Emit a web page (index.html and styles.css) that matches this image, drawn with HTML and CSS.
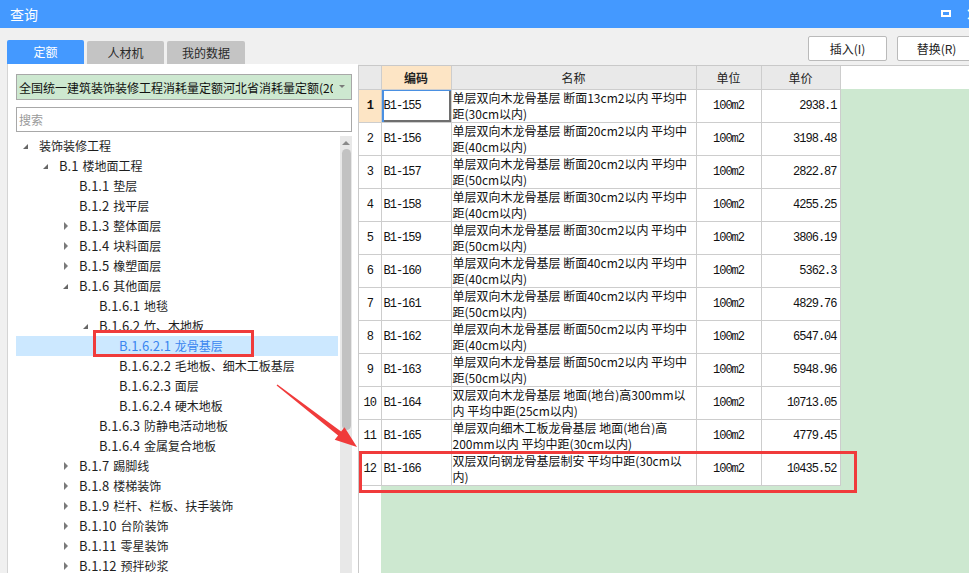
FILE: index.html
```html
<!DOCTYPE html>
<html lang="zh-CN">
<head>
<meta charset="utf-8">
<title>查询</title>
<link rel="stylesheet" href="styles.css">
</head>
<body>
<div class="window">
  <div class="titlebar">
    <span class="title">查询</span>
    <span class="tb-max"></span>
    <span class="tb-close">×</span>
  </div>
  <div class="main">
    <div class="left">
      <div class="tabs">
        <div class="tab active">定额</div>
        <div class="tab">人材机</div>
        <div class="tab wide">我的数据</div>
      </div>
      <div class="panel">
        <div class="select">
          <span class="select-text">全国统一建筑装饰装修工程消耗量定额河北省消耗量定额(2012)</span>
          <span class="caret"></span>
        </div>
        <div class="search">搜索</div>
        <div class="tree-area">
          <ul class="tree">
            <li class="node l0"><span class="tg exp"></span>装饰装修工程</li>
            <li class="node l1"><span class="tg exp"></span><span class="no">B.1</span>楼地面工程</li>
            <li class="node l2"><span class="tg"></span><span class="no">B.1.1</span>垫层</li>
            <li class="node l2"><span class="tg"></span><span class="no">B.1.2</span>找平层</li>
            <li class="node l2"><span class="tg col"></span><span class="no">B.1.3</span>整体面层</li>
            <li class="node l2"><span class="tg col"></span><span class="no">B.1.4</span>块料面层</li>
            <li class="node l2"><span class="tg col"></span><span class="no">B.1.5</span>橡塑面层</li>
            <li class="node l2"><span class="tg exp"></span><span class="no">B.1.6</span>其他面层</li>
            <li class="node l3"><span class="tg"></span><span class="no">B.1.6.1</span>地毯</li>
            <li class="node l3"><span class="tg exp"></span><span class="no">B.1.6.2</span>竹、木地板</li>
            <li class="node l4 selected"><span class="tg"></span><span class="no">B.1.6.2.1</span>龙骨基层</li>
            <li class="node l4"><span class="tg"></span><span class="no">B.1.6.2.2</span>毛地板、细木工板基层</li>
            <li class="node l4"><span class="tg"></span><span class="no">B.1.6.2.3</span>面层</li>
            <li class="node l4"><span class="tg"></span><span class="no">B.1.6.2.4</span>硬木地板</li>
            <li class="node l3"><span class="tg"></span><span class="no">B.1.6.3</span>防静电活动地板</li>
            <li class="node l3"><span class="tg"></span><span class="no">B.1.6.4</span>金属复合地板</li>
            <li class="node l2"><span class="tg col"></span><span class="no">B.1.7</span>踢脚线</li>
            <li class="node l2"><span class="tg col"></span><span class="no">B.1.8</span>楼梯装饰</li>
            <li class="node l2"><span class="tg col"></span><span class="no">B.1.9</span>栏杆、栏板、扶手装饰</li>
            <li class="node l2"><span class="tg col"></span><span class="no">B.1.10</span>台阶装饰</li>
            <li class="node l2"><span class="tg col"></span><span class="no">B.1.11</span>零星装饰</li>
            <li class="node l2"><span class="tg col"></span><span class="no">B.1.12</span>预拌砂浆</li>
          </ul>
          <div class="scrollbar">
            <div class="sb-up"></div>
            <div class="sb-thumb"></div>
          </div>
        </div>
      </div>
    </div>
    <div class="right">
      <div class="toolbar">
        <button class="btn">插入(I)</button>
        <button class="btn">替换(R)</button>
      </div>
      <div class="grid">
        <table class="data">
          <colgroup>
            <col class="c-rn"><col class="c-code"><col class="c-name"><col class="c-unit"><col class="c-price">
          </colgroup>
          <thead>
            <tr>
              <th class="rn"></th>
              <th class="code-h">编码</th>
              <th>名称</th>
              <th>单位</th>
              <th>单价</th>
            </tr>
          </thead>
          <tbody>
            <tr><td class="rn cur">1</td><td class="code sel">B1-155</td><td class="name">单层双向木龙骨基层 断面13cm2以内 平均中<br>距(30cm以内)</td><td class="unit">100m2</td><td class="price">2938.1</td></tr>
            <tr><td class="rn">2</td><td class="code">B1-156</td><td class="name">单层双向木龙骨基层 断面20cm2以内 平均中<br>距(40cm以内)</td><td class="unit">100m2</td><td class="price">3198.48</td></tr>
            <tr><td class="rn">3</td><td class="code">B1-157</td><td class="name">单层双向木龙骨基层 断面20cm2以内 平均中<br>距(50cm以内)</td><td class="unit">100m2</td><td class="price">2822.87</td></tr>
            <tr><td class="rn">4</td><td class="code">B1-158</td><td class="name">单层双向木龙骨基层 断面30cm2以内 平均中<br>距(40cm以内)</td><td class="unit">100m2</td><td class="price">4255.25</td></tr>
            <tr><td class="rn">5</td><td class="code">B1-159</td><td class="name">单层双向木龙骨基层 断面30cm2以内 平均中<br>距(50cm以内)</td><td class="unit">100m2</td><td class="price">3806.19</td></tr>
            <tr><td class="rn">6</td><td class="code">B1-160</td><td class="name">单层双向木龙骨基层 断面40cm2以内 平均中<br>距(40cm以内)</td><td class="unit">100m2</td><td class="price">5362.3</td></tr>
            <tr><td class="rn">7</td><td class="code">B1-161</td><td class="name">单层双向木龙骨基层 断面40cm2以内 平均中<br>距(50cm以内)</td><td class="unit">100m2</td><td class="price">4829.76</td></tr>
            <tr><td class="rn">8</td><td class="code">B1-162</td><td class="name">单层双向木龙骨基层 断面50cm2以内 平均中<br>距(40cm以内)</td><td class="unit">100m2</td><td class="price">6547.04</td></tr>
            <tr><td class="rn">9</td><td class="code">B1-163</td><td class="name">单层双向木龙骨基层 断面50cm2以内 平均中<br>距(50cm以内)</td><td class="unit">100m2</td><td class="price">5948.96</td></tr>
            <tr><td class="rn">10</td><td class="code">B1-164</td><td class="name">双层双向木龙骨基层 地面(地台)高300mm以<br>内 平均中距(25cm以内)</td><td class="unit">100m2</td><td class="price">10713.05</td></tr>
            <tr><td class="rn">11</td><td class="code">B1-165</td><td class="name">单层双向细木工板龙骨基层 地面(地台)高<br>200mm以内 平均中距(30cm以内)</td><td class="unit">100m2</td><td class="price">4779.45</td></tr>
            <tr><td class="rn">12</td><td class="code">B1-166</td><td class="name">双层双向钢龙骨基层制安 平均中距(30cm以<br>内)</td><td class="unit">100m2</td><td class="price">10435.52</td></tr>
          </tbody>
        </table>
      </div>
    </div>
  </div>
  <svg class="annot" width="969" height="573" viewBox="0 0 969 573">
    <rect x="94.5" y="331.5" width="158" height="24" fill="none" stroke="#f03b3b" stroke-width="3"/>
    <rect x="360.5" y="452.5" width="495" height="39" fill="none" stroke="#f03b3b" stroke-width="3"/>
    <polygon fill="#f03b3b" points="276.6,385.5 338.1,435.6 334.7,439.8 357,447 344.5,427.2 341.1,431.5 277.4,384.5"/>
  </svg>
</div>
</body>
</html>
```
FILE: styles.css
```css
* { box-sizing: border-box; }
html, body { margin: 0; padding: 0; }
body {
  width: 969px;
  height: 573px;
  overflow: hidden;
  background: #f0f0f0;
  font-family: "Noto Sans CJK SC", "Noto Sans", sans-serif;
  color: #1e1e1e;
}
.window {
  position: relative;
  width: 969px;
  height: 573px;
  display: flex;
  flex-direction: column;
  overflow: hidden;
}

/* title bar */
.titlebar {
  height: 28px;
  flex: 0 0 28px;
  background: #4499ff;
  display: flex;
  align-items: center;
  padding-left: 10px;
  color: #fff;
}
.title { font-size: 14px; line-height: 28px; flex: 1; }
.tb-max {
  width: 10px;
  height: 7px;
  border: 2px solid #fff;
  margin-right: 14px;
  margin-top: -2px;
}
.tb-close {
  font-size: 18px;
  line-height: 28px;
  margin-right: -8px;
  width: 12px;
  font-family: "DejaVu Sans", sans-serif;
}

/* layout */
.main {
  flex: 1;
  display: flex;
  min-height: 0;
}
.left {
  width: 358px;
  flex: 0 0 358px;
  padding-left: 7px;
  display: flex;
  flex-direction: column;
}
.tabs {
  margin-top: 12px;
  height: 24px;
  display: flex;
  align-items: flex-end;
  gap: 3px;
}
.tab {
  width: 77px;
  height: 23px;
  background: #c4c4c4;
  border-radius: 2px 2px 0 0;
  font-size: 12px;
  line-height: 23px;
  text-align: center;
  color: #2a2a2a;
}
.tab.wide { width: 78px; }
.tab.active {
  height: 24px;
  line-height: 24px;
  background: #4499ff;
  color: #fff;
}
.panel {
  flex: 1;
  min-height: 0;
  background: #fff;
  border-left: 1px solid #d4d4d4;
  padding: 10px 6px 0 8px;
  display: flex;
  flex-direction: column;
}
.select {
  height: 26px;
  flex: 0 0 26px;
  border: 1px solid #a8a8a8;
  background: #cde8d0;
  display: flex;
  align-items: center;
  padding-left: 2px;
  font-size: 12px;
  color: #111;
}
.select-text {
  flex: 1;
  overflow: hidden;
  white-space: nowrap;
}
.caret {
  width: 18px;
  flex: 0 0 18px;
  height: 10px;
  position: relative;
}
.caret::after {
  content: "";
  position: absolute;
  left: 6px;
  top: 3px;
  border-left: 3px solid transparent;
  border-right: 3px solid transparent;
  border-top: 3px solid #7a7a7a;
}
.search {
  margin-top: 7px;
  height: 25px;
  flex: 0 0 25px;
  border: 1px solid #a8a8a8;
  padding-left: 2px;
  font-size: 12px;
  line-height: 23px;
  color: #9a9a9a;
}
.tree-area {
  margin-top: 4px;
  flex: 1;
  min-height: 0;
  display: flex;
  overflow: hidden;
}
.tree {
  flex: 1;
  list-style: none;
  margin: 0;
  padding: 0;
}
.node {
  height: 20px;
  line-height: 20px;
  display: flex;
  align-items: center;
  font-size: 12px;
  color: #1e1e1e;
  white-space: nowrap;
}
.node .no {
  font-size: 13px;
  margin-right: 4px;
}
.l0 { padding-left: 3px; }
.l1 { padding-left: 23px; }
.l2 { padding-left: 43px; }
.l3 { padding-left: 63px; }
.l4 { padding-left: 83px; }
.tg {
  width: 20px;
  flex: 0 0 20px;
  height: 20px;
  position: relative;
}
.tg.exp::after {
  content: "";
  position: absolute;
  left: 4px;
  top: 8px;
  border-left: 5px solid transparent;
  border-bottom: 5px solid #666;
}
.tg.col::after {
  content: "";
  position: absolute;
  left: 5px;
  top: 6px;
  border-top: 4px solid transparent;
  border-bottom: 4px solid transparent;
  border-left: 4px solid #7a7a7a;
}
.node.selected {
  background: #cce8ff;
  color: #3a86ef;
  margin-right: 2px;
}
.scrollbar {
  width: 12px;
  flex: 0 0 12px;
  background: #e8e8e8;
  display: flex;
  flex-direction: column;
  align-items: center;
}
.sb-up {
  margin-top: 5px;
  width: 0;
  height: 0;
  border-left: 4px solid transparent;
  border-right: 4px solid transparent;
  border-bottom: 4px solid #8a8a8a;
}
.sb-thumb {
  margin-top: 4px;
  width: 9px;
  height: 281px;
  background: #c2c2c2;
  border-radius: 5px;
}

/* right side */
.right {
  flex: 1;
  min-width: 0;
  display: flex;
  flex-direction: column;
  overflow: hidden;
}
.toolbar {
  height: 37px;
  flex: 0 0 37px;
  padding-top: 8px;
  padding-left: 450px;
  display: flex;
  gap: 10px;
}
.btn {
  width: 79px;
  flex: 0 0 79px;
  height: 25px;
  background: #fff;
  border: 1px solid #bababa;
  border-radius: 2px;
  font-family: "Noto Sans CJK SC", "Noto Sans", sans-serif;
  font-size: 12px;
  color: #222;
  padding: 0;
}
.grid {
  flex: 1;
  min-height: 0;
  border-top: 1px solid #c9c9c9;
  border-left: 1px solid #c9c9c9;
  background:
    linear-gradient(#fff, #fff) top left / 100% 23px no-repeat,
    linear-gradient(to right, #fff 22px, #cde8d0 22px);
}
.data {
  border-collapse: collapse;
  table-layout: fixed;
  width: 481px;
  background: #fff;
}
.c-rn { width: 22px; }
.c-code { width: 70px; }
.c-name { width: 245px; }
.c-unit { width: 65px; }
.c-price { width: 79px; }
.data th, .data td {
  border: 1px solid #cdcdcd;
  padding: 0 2px;
  white-space: nowrap;
  overflow: hidden;
}
.data tr > :first-child { border-left: none; }
.data thead th { border-top: none; }
.data thead tr { height: 23px; }
.data tbody tr { height: 33px; }
.data th {
  background: #e9e9e9;
  font-size: 12px;
  font-weight: normal;
  color: #222;
  text-align: center;
}
.data th.code-h {
  background: #fde5c5;
  font-weight: bold;
}
.data td {
  font-size: 12px;
  vertical-align: middle;
  color: #111;
}
.data td.rn, .data td.code, .data td.unit, .data td.price {
  font-family: "Liberation Mono", "DejaVu Sans Mono", monospace;
  font-size: 12px;
  letter-spacing: -1px;
}
.data td.rn { text-align: center; padding: 0; }
.data td.rn.cur { background: #fde5c5; font-weight: bold; }
.data td.code.sel {
  box-shadow: inset 2px 1px 0 #4a90e2, inset -2px -2px 0 #6e6e6e;
}
.data td.name { line-height: 16px; padding: 0 1px; }
.data td.unit { text-align: center; }
.data td.price { text-align: right; padding-right: 3px; }

/* annotations */
.annot {
  position: absolute;
  left: 0;
  top: 0;
  pointer-events: none;
}
```
